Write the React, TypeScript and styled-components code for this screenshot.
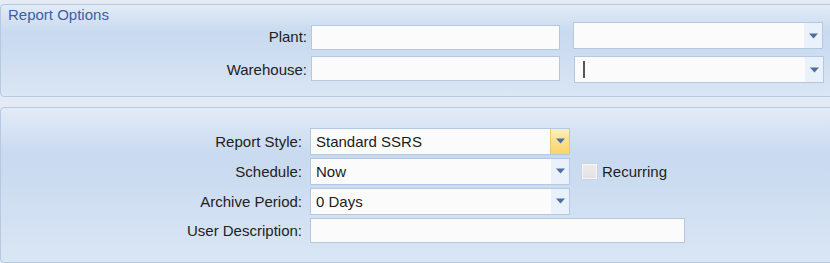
import React from "react";
import styled, { createGlobalStyle, css } from "styled-components";

const Global = createGlobalStyle`
  html, body { margin: 0; padding: 0; }
  body {
    background: #e4ebf5;
    font-family: "Liberation Sans", Arial, sans-serif;
    font-size: 15px;
    color: #1e1e1e;
    overflow: hidden;
  }
`;

const Page = styled.div`
  width: 830px;
  height: 263px;
  padding-top: 4px;
  box-sizing: border-box;
  display: flex;
  flex-direction: column;
  gap: 10px;
`;

const Panel = styled.section<{ $height: number }>`
  box-sizing: border-box;
  height: ${(p) => p.$height}px;
  margin-right: -6px;
  border: 1px solid #b6c9e1;
  border-radius: 4px;
  background: linear-gradient(
    to bottom,
    #e3ebf6 0%,
    #d6e3f3 14%,
    #c8daef 30%,
    #cfdef1 60%,
    #d9e6f4 100%
  );
  display: flex;
  flex-direction: column;
`;

const Title = styled.div`
  color: #3b5fa6;
  padding: 1px 0 0 7px;
  height: 16px;
  line-height: 17px;
`;

const Rows = styled.div<{ $top: number; $gap: number }>`
  display: flex;
  flex-direction: column;
  gap: ${(p) => p.$gap}px;
  padding-top: ${(p) => p.$top}px;
`;

const Row = styled.div`
  display: flex;
  align-items: center;
`;

const Label = styled.label<{ $width: number }>`
  width: ${(p) => p.$width}px;
  text-align: right;
  box-sizing: border-box;
  white-space: nowrap;
  color: #222;
`;

const fieldBox = css`
  box-sizing: border-box;
  border: 1px solid #b5c8e2;
  background: #fbfbfb;
`;

const TextBox = styled.div<{ $width: number; $offset?: number; $ml?: number }>`
  ${fieldBox};
  width: ${(p) => p.$width}px;
  height: 25px;
  margin-top: ${(p) => p.$offset ?? 0}px;
  margin-left: ${(p) => p.$ml ?? 0}px;
  align-self: flex-start;
`;

const ComboBox = styled.div<{ $width: number; $ml?: number }>`
  ${fieldBox};
  width: ${(p) => p.$width}px;
  height: 27px;
  margin-left: ${(p) => p.$ml ?? 0}px;
  display: flex;
  align-self: flex-start;
`;

const ComboText = styled.div`
  flex: 1;
  padding-left: 5px;
  line-height: 25px;
  color: #1c1c1c;
  display: flex;
  align-items: center;
`;

const Caret = styled.span`
  display: inline-block;
  width: 2px;
  height: 17px;
  background: #555;
  margin-left: 3px;
`;

const DropButton = styled.div<{ $hot?: boolean }>`
  width: 18px;
  display: flex;
  align-items: center;
  justify-content: center;
  ${(p) =>
    p.$hot
      ? css`
          background: linear-gradient(to bottom, #fef0c0 0%, #fcdf8c 50%, #fbd36c 100%);
          border-left: 1px solid #e7c77a;
        `
      : css`
          background: #e9f1fb;
        `}
`;

const Arrow = () => (
  <svg width="9" height="6" viewBox="0 0 9 6">
    <polygon points="0,0.5 9,0.5 4.5,5.5" fill="#4d6fa3" />
  </svg>
);

const CheckWrap = styled.div`
  display: flex;
  align-items: center;
  gap: 4px;
  margin-left: 11px;
`;

const CheckBox = styled.div`
  width: 17px;
  height: 17px;
  box-sizing: border-box;
  border: 1px solid #cbd4df;
  background: linear-gradient(to bottom, #ececec, #e2e2e2);
  box-shadow: inset 0 0 0 1px #f6f6f6;
`;

const CheckLabel = styled.span`
  color: #1e1e1e;
`;

const Combo = ({
  width,
  text,
  hot,
  caret,
  ml,
}: {
  width: number;
  text?: string;
  hot?: boolean;
  caret?: boolean;
  ml?: number;
}) => (
  <ComboBox $width={width} $ml={ml}>
    <ComboText>
      {caret ? <Caret /> : null}
      {text}
    </ComboText>
    <DropButton $hot={hot}>
      <Arrow />
    </DropButton>
  </ComboBox>
);

export default function App() {
  return (
    <>
      <Global />
      <Page>
        <Panel $height={95}>
          <Title>Report Options</Title>
          <Rows $top={0} $gap={6}>
            <Row>
              <Label $width={306}>Plant:</Label>
              <TextBox $width={249} $offset={3} $ml={4} />
              <Combo width={250} ml={13} />
            </Row>
            <Row>
              <Label $width={306}>Warehouse:</Label>
              <TextBox $width={249} $ml={4} />
              <Combo width={250} ml={14} caret />
            </Row>
          </Rows>
        </Panel>
        <Panel $height={160}>
          <Rows $top={20} $gap={3}>
            <Row>
              <Label $width={301}>Report Style:</Label>
              <Combo width={260} ml={8} text="Standard SSRS" hot />
            </Row>
            <Row>
              <Label $width={301}>Schedule:</Label>
              <Combo width={260} ml={8} text="Now" />
              <CheckWrap>
                <CheckBox />
                <CheckLabel>Recurring</CheckLabel>
              </CheckWrap>
            </Row>
            <Row>
              <Label $width={301}>Archive Period:</Label>
              <Combo width={260} ml={8} text="0 Days" />
            </Row>
            <Row>
              <Label $width={301}>User Description:</Label>
              <TextBox $width={375} $ml={8} />
            </Row>
          </Rows>
        </Panel>
      </Page>
    </>
  );
}
